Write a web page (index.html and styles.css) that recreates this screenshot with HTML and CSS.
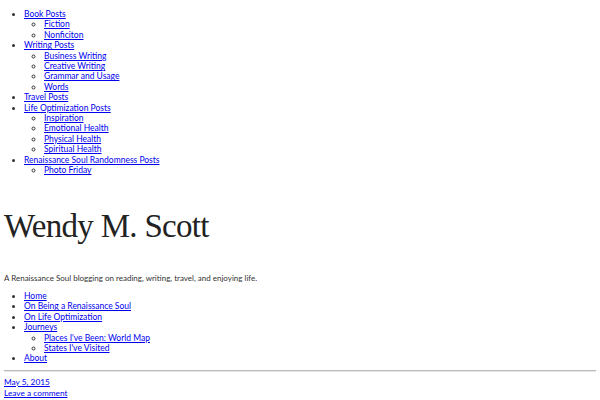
FILE: index.html
```html
<!DOCTYPE html>
<html>
<head>
<meta charset="utf-8">
<link rel="stylesheet" href="styles.css">
</head>
<body>
<ul class="menu">
  <li><a href="#">Book Posts</a>
    <ul>
      <li><a href="#">Fiction</a></li>
      <li><a href="#">Nonficiton</a></li>
    </ul>
  </li>
  <li><a href="#">Writing Posts</a>
    <ul>
      <li><a href="#">Business Writing</a></li>
      <li><a href="#">Creative Writing</a></li>
      <li><a href="#">Grammar and Usage</a></li>
      <li><a href="#">Words</a></li>
    </ul>
  </li>
  <li><a href="#">Travel Posts</a></li>
  <li><a href="#">Life Optimization Posts</a>
    <ul>
      <li><a href="#">Inspiration</a></li>
      <li><a href="#">Emotional Health</a></li>
      <li><a href="#">Physical Health</a></li>
      <li><a href="#">Spiritual Health</a></li>
    </ul>
  </li>
  <li><a href="#">Renaissance Soul Randomness Posts</a>
    <ul>
      <li><a href="#">Photo Friday</a></li>
    </ul>
  </li>
</ul>
<header class="site-header">
  <h1 class="site-title">Wendy M. Scott</h1>
  <p class="tagline">A Renaissance Soul blogging on reading, writing, travel, and enjoying life.</p>
</header>
<ul class="menu nav">
  <li><a href="#">Home</a></li>
  <li><a href="#">On Being a Renaissance Soul</a></li>
  <li><a href="#">On Life Optimization</a></li>
  <li><a href="#">Journeys</a>
    <ul>
      <li><a href="#">Places I've Been: World Map</a></li>
      <li><a href="#">States I've Visited</a></li>
    </ul>
  </li>
  <li><a href="#">About</a></li>
</ul>
<hr class="rule">
<div class="meta">
  <a href="#">May 5, 2015</a><br>
  <a href="#">Leave a comment</a>
</div>
</body>
</html>
```
FILE: styles.css
```css
html, body {
  margin: 0;
  padding: 0;
  background: #fff;
}
body {
  padding: 0 4px;
  font-family: Lato, "Liberation Sans", sans-serif;
  font-size: 8.5px;
  line-height: 10.4px;
  color: #333;
}
a {
  color: #0000ee;
}
.menu {
  margin: 9px 0 0;
  padding-left: 20px;
}
.menu ul {
  margin: 0;
  padding-left: 20px;
  list-style: circle;
}
.site-header {
  margin-top: 30px;
}
.site-title {
  margin: 0;
  font-family: "Liberation Serif", serif;
  font-weight: normal;
  font-size: 33px;
  letter-spacing: -0.7px;
  line-height: 40px;
  color: #222;
}
.tagline {
  margin: 27px 0 0;
  font-size: 8px;
}
.nav {
  margin-top: 8px;
}
.rule {
  margin: 6px 0 5px;
  border: 0;
  border-top: 1px solid #bbb;
  border-bottom: 1px solid #e6e6e6;
}
.meta {
  font-size: 8.3px;
  line-height: 11px;
}
```
